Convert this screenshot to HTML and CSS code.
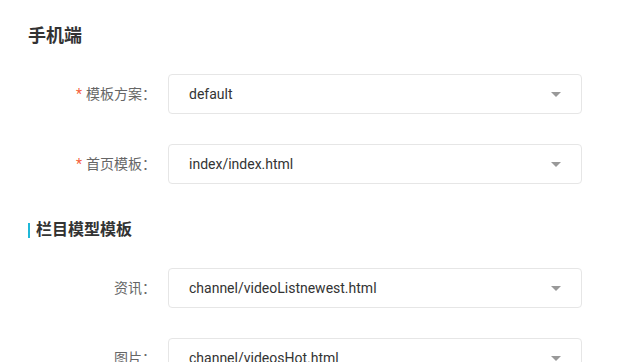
FILE: index.html
```html
<!DOCTYPE html>
<html>
<head>
  <meta charset="UTF-8">
  <title>模板设置</title>
  <link rel="stylesheet" href="styles.css">
</head>
<body>
  <div class="page">
    <!-- Mobile templates -->
    <h2 class="pageTitle">手机端</h2>
    <div class="formRow">
      <label class="formLabel"><span class="required">*</span>模板方案：</label>
      <div class="selectBox">
        <span class="selectValue">default</span>
        <span class="selectArrow"></span>
      </div>
    </div>
    <div class="formRow">
      <label class="formLabel"><span class="required">*</span>首页模板：</label>
      <div class="selectBox">
        <span class="selectValue">index/index.html</span>
        <span class="selectArrow"></span>
      </div>
    </div>
    <!-- Channel model templates -->
    <h3 class="sectionTitle">栏目模型模板</h3>
    <div class="formRow">
      <label class="formLabel">资讯：</label>
      <div class="selectBox">
        <span class="selectValue">channel/videoListnewest.html</span>
        <span class="selectArrow"></span>
      </div>
    </div>
    <div class="formRow">
      <label class="formLabel">图片：</label>
      <div class="selectBox">
        <span class="selectValue">channel/videosHot.html</span>
        <span class="selectArrow"></span>
      </div>
    </div>
  </div>
</body>
</html>
```
FILE: styles.css
```css
body {
  font-family: Roboto, "Noto Sans CJK SC", sans-serif;
  margin: 0;
  padding: 0;
  background-color: #fff;
  color: #333;
  overflow: hidden;
}
.page {
  padding: 24px 28px 0;
}
.pageTitle {
  font-size: 18px;
  line-height: 24px;
  font-weight: bold;
  margin: 0 0 26px;
  color: #333;
}
/* Section heading with blue bar */
.sectionTitle {
  display: flex;
  align-items: center;
  font-size: 16px;
  line-height: 24px;
  font-weight: bold;
  margin: 0 0 26px;
  padding-top: 4px;
  color: #333;
}
.sectionTitle::before {
  content: "";
  width: 2px;
  height: 15px;
  background-color: #1fb8d8;
  margin-right: 6px;
}
.formRow {
  display: flex;
  align-items: center;
  height: 40px;
  margin-bottom: 30px;
}
.formLabel {
  width: 128px;
  margin-right: 12px;
  text-align: right;
  font-size: 14px;
  line-height: 20px;
  color: #666;
}
.required {
  color: #f5603c;
  margin-right: 4px;
}
.selectBox {
  width: 414px;
  height: 40px;
  box-sizing: border-box;
  border: 1px solid #e6e6e6;
  border-radius: 4px;
  display: flex;
  align-items: center;
  justify-content: space-between;
  padding: 0 20px;
  font-size: 14px;
  line-height: 20px;
  color: #333;
}
.selectArrow {
  width: 0;
  height: 0;
  border-left: 5px solid transparent;
  border-right: 5px solid transparent;
  border-top: 5px solid #999;
}
```
